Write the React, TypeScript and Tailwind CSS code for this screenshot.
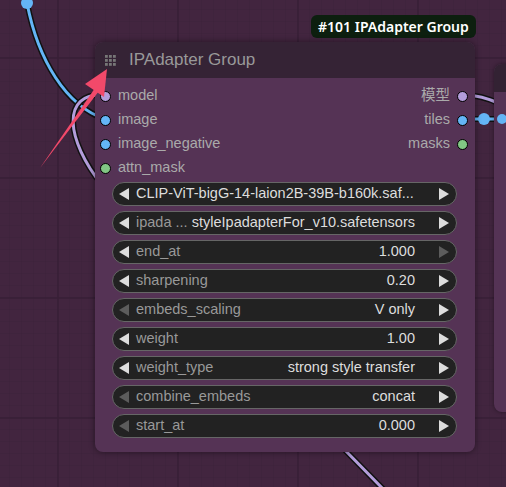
import React from 'react';

const font = { fontFamily: '"Liberation Sans", Arial, "Noto Sans CJK SC", sans-serif' };

const Tri = ({ dir, dim }: { dir: 'l' | 'r'; dim?: boolean }) => (
  <svg width="10" height="12" viewBox="0 0 10 12" className="shrink-0">
    <polygon points={dir === 'l' ? '10,0 10,12 0,6' : '0,0 0,12 10,6'} fill={dim ? '#5c5c5c' : '#dddddd'} />
  </svg>
);

type W = { label?: string; value: string; ld?: boolean; rd?: boolean; valueLeft?: boolean };

const widgets: W[] = [
  { value: 'CLIP-ViT-bigG-14-laion2B-39B-b160k.saf...', valueLeft: true },
  { label: 'ipada ...', value: 'styleIpadapterFor_v10.safetensors' },
  { label: 'end_at', value: '1.000', rd: true },
  { label: 'sharpening', value: '0.20' },
  { label: 'embeds_scaling', value: 'V only', ld: true },
  { label: 'weight', value: '1.00' },
  { label: 'weight_type', value: 'strong style transfer' },
  { label: 'combine_embeds', value: 'concat', ld: true },
  { label: 'start_at', value: '0.000', ld: true },
];

const Widget = ({ w }: { w: W }) => (
  <div className="h-[24px] rounded-full bg-[#222222] border border-[#666666] flex items-center pl-[6px] pr-[7px] text-[14.5px]">
    <Tri dir="l" dim={w.ld} />
    <div className="flex-1 flex items-center min-w-0 pl-[7px] pr-[24px]">
      {w.valueLeft ? (
        <span className="text-[#dddddd] whitespace-nowrap overflow-hidden">{w.value}</span>
      ) : (
        <>
          <span className="text-[#999999] whitespace-nowrap">{w.label}</span>
          <span className="flex-1 text-right text-[#dddddd] whitespace-nowrap">{w.value}</span>
        </>
      )}
    </div>
    <Tri dir="r" dim={w.rd} />
  </div>
);

const Dot = ({ c }: { c: string }) => (
  <span className="w-[11px] h-[11px] rounded-full border border-black shrink-0" style={{ background: c }} />
);

const inputs = [
  { n: 'model', c: '#b39ddb' },
  { n: 'image', c: '#64b5f6' },
  { n: 'image_negative', c: '#64b5f6' },
  { n: 'attn_mask', c: '#81c784' },
];
const outputs = [
  { n: '模型', c: '#b39ddb' },
  { n: 'tiles', c: '#64b5f6' },
  { n: 'masks', c: '#81c784' },
];

export default function App() {
  return (
    <div className="relative w-[506px] h-[487px] overflow-hidden bg-[#42253f]" style={font}>
      {/* canvas grid */}
      <svg className="absolute inset-0" width="506" height="487">
        <defs>
          <pattern id="g" width="12" height="12" patternUnits="userSpaceOnUse" x="-2" y="-2">
            <path d="M12 0 V12 M0 12 H12" stroke="#3b2139" strokeWidth="1" fill="none" />
          </pattern>
        </defs>
        <rect width="506" height="487" fill="url(#g)" />
        <path d="M58 0 V487 M178 0 V487 M298 0 V487 M418 0 V487 M0 58 H506 M0 178 H506 M0 298 H506 M0 418 H506" stroke="#391f37" strokeWidth="1.5" />
      </svg>

      {/* wires under nodes */}
      <svg className="absolute inset-0" width="506" height="487">
        <g fill="none" strokeLinecap="round">
          <path d="M27 3 C38 60, 66 106, 105 119" stroke="#111" strokeWidth="6" />
          <path d="M27 3 C38 60, 66 106, 105 119" stroke="#64b5f6" strokeWidth="3" />
          <path d="M105 95 C60 92, 66 140, 102 185" stroke="#111" strokeWidth="6" />
          <path d="M105 95 C60 92, 66 140, 102 185" stroke="#b39ddb" strokeWidth="3" />
          <path d="M340 445 L386 492" stroke="#111" strokeWidth="6" />
          <path d="M340 445 L386 492" stroke="#b39ddb" strokeWidth="3" />
          <path d="M463 95 C478 95, 488 98, 500 104" stroke="#111" strokeWidth="6" />
          <path d="M463 95 C478 95, 488 98, 500 104" stroke="#b39ddb" strokeWidth="3" />
          <path d="M463 119 L506 119" stroke="#111" strokeWidth="6" />
          <path d="M463 119 L506 119" stroke="#64b5f6" strokeWidth="3" />
        </g>
        <circle cx="27" cy="3" r="6" fill="#64b5f6" />
        <circle cx="484" cy="119" r="6" fill="#64b5f6" />
      </svg>

      {/* right node (partly visible) */}
      <div className="absolute left-[494px] top-[64px] w-[40px] h-[348px] rounded-lg bg-[#553355] overflow-hidden shadow-[0_0_4px_rgba(0,0,0,0.4)]">
        <div className="h-[28px] bg-[#332233]" />
      </div>
      <svg className="absolute inset-0 pointer-events-none" width="506" height="487">
        <circle cx="502" cy="119" r="5" fill="#64b5f6" />
      </svg>

      {/* title badge */}
      <div className="absolute left-[311px] top-[15px] h-[23px] px-[7px] rounded-md bg-[#0d1f0f] text-white text-[14px] font-semibold flex items-center" style={{ fontFamily: '"Noto Sans", "Open Sans", sans-serif' }}>
        #101 IPAdapter Group
      </div>

      {/* main node */}
      <div className="absolute left-[95px] top-[42px] w-[380px] h-[410px] rounded-lg bg-[#553355] overflow-hidden shadow-[0_0_6px_rgba(0,0,0,0.45)]">
        <div className="h-[36px] bg-[#352335] flex items-center pl-[10px] gap-[13px]">
          <svg width="11" height="11" viewBox="0 0 11 11">
            {[0, 4, 8].map((y) => [0, 4, 8].map((x) => <rect key={`${x}-${y}`} x={x} y={y} width="2.8" height="2.8" fill="#777" />))}
          </svg>
          <span className="text-[17px] text-[#999999]">IPAdapter Group</span>
        </div>
        <div className="flex pt-[6px]">
          <div className="flex-1 flex flex-col">
            {inputs.map((s) => (
              <div key={s.n} className="h-[24px] flex items-center gap-[7px] pl-[5px] text-[14.5px] text-[#aaaaaa]">
                <Dot c={s.c} />
                <span>{s.n}</span>
              </div>
            ))}
          </div>
          <div className="flex flex-col">
            {outputs.map((s) => (
              <div key={s.n} className="h-[24px] flex items-center justify-end gap-[7px] pr-[7px] text-[14.5px] text-[#aaaaaa]">
                <span>{s.n}</span>
                <Dot c={s.c} />
              </div>
            ))}
          </div>
        </div>
        <div className="flex flex-col gap-[5px] mt-[2px] ml-[17px] mr-[18px]">
          {widgets.map((w, i) => (
            <Widget key={i} w={w} />
          ))}
        </div>
      </div>

      {/* red annotation arrow */}
      <svg className="absolute inset-0 pointer-events-none" width="506" height="487">
        <polygon points="40,168 95,88 99,91" fill="#f2496a" />
        <polygon points="107,69 85,84 104,97" fill="#f2496a" />
      </svg>
    </div>
  );
}
